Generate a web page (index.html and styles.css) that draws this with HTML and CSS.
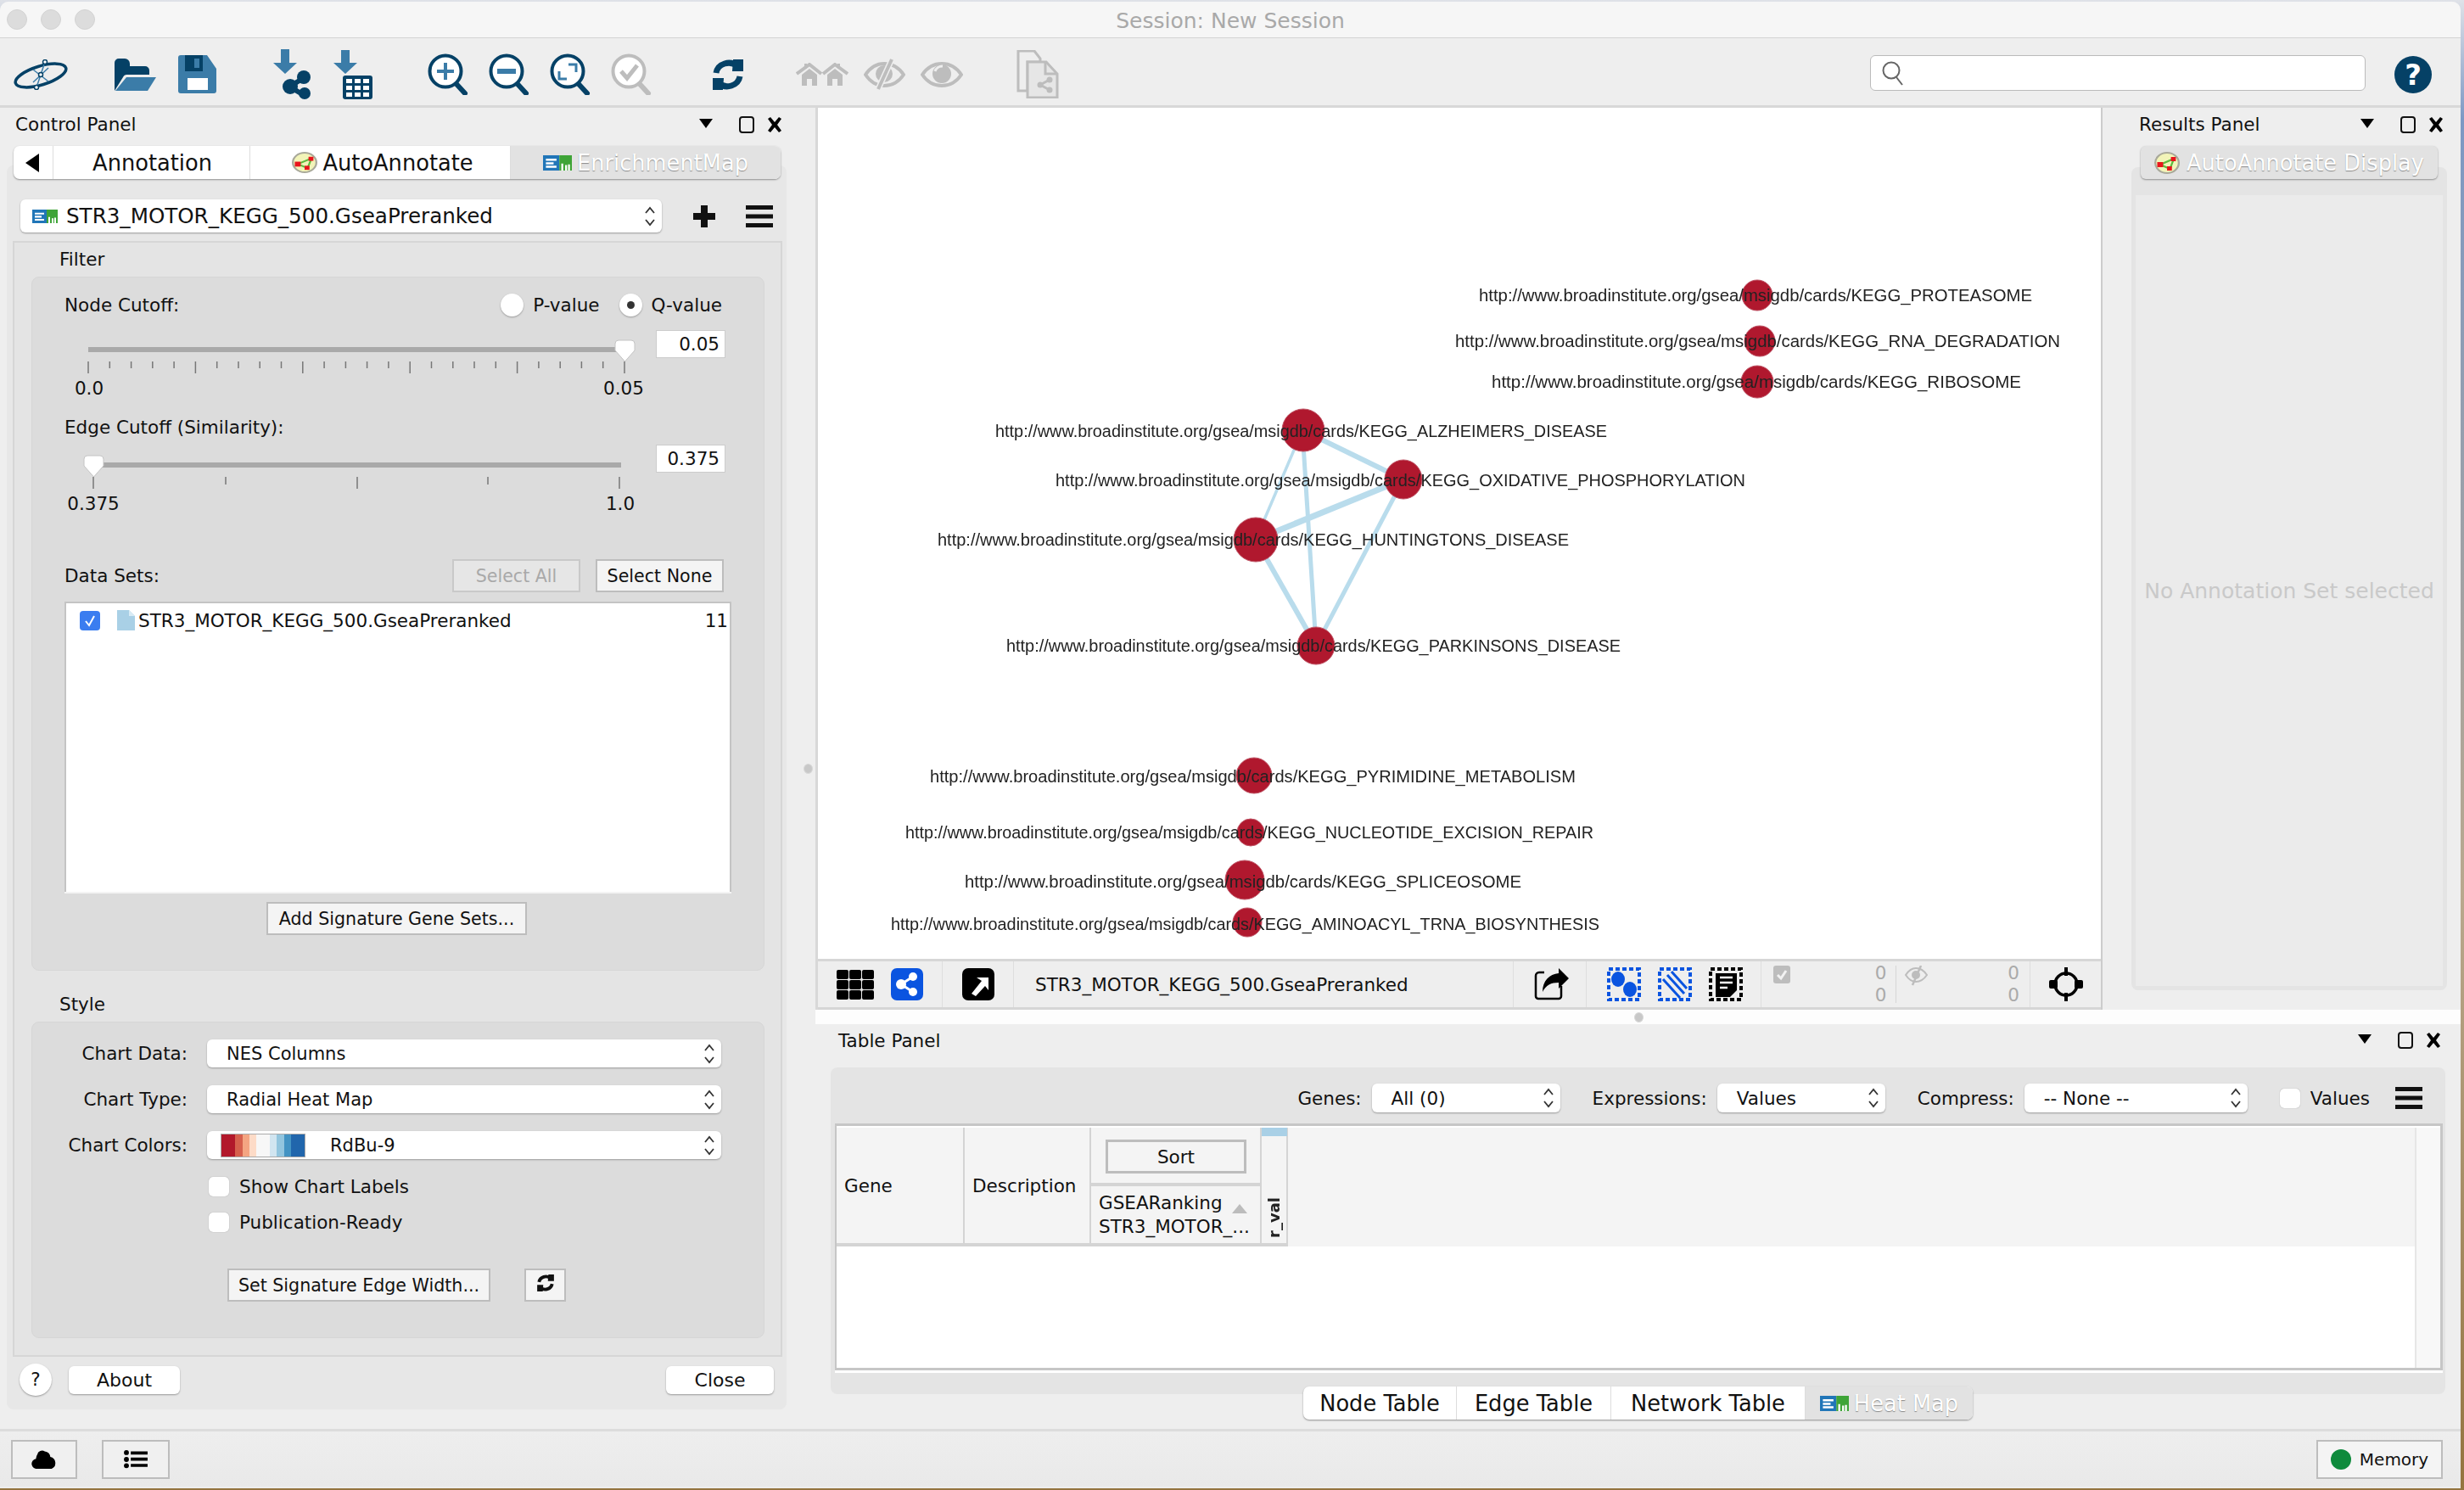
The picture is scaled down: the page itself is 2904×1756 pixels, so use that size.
FILE: index.html
```html
<!DOCTYPE html>
<html lang="en">
<head>
  <meta charset="UTF-8">
  <title>Session: New Session</title>
  <link rel="stylesheet" href="styles.css">
</head>
<body>
  <svg class="defs" width="0" height="0">
    <symbol id="em" viewBox="0 0 30 22" preserveAspectRatio="none">
      <rect width="17" height="22" fill="#2176b8"/><rect x="17" width="13" height="22" fill="#3ea437"/>
      <path d="M3 5h11v3H3zM3 10h8v3H3zM3 15h11v3H3z" fill="#fff"/>
      <path d="M19 12h2v10h-2zM23 14h2v8h-2zM26 13h2v9h-2z" fill="#fff"/>
    </symbol>
    <symbol id="aa" viewBox="0 0 26 26" preserveAspectRatio="none">
      <circle cx="13" cy="13" r="12" fill="#f2f4b8" stroke="#a9a99a" stroke-width="2"/>
      <path d="M6 15L20 8M6 15L16 20M16 20L20 8" stroke="#5dbb3f" stroke-width="2"/>
      <rect x="3" y="12" width="6" height="6" fill="#e8141c"/><rect x="17" y="6" width="5" height="5" fill="#e8141c"/><rect x="13" y="17" width="5" height="5" fill="#e8141c"/>
    </symbol>
    <symbol id="updown" viewBox="0 0 14 26">
      <path d="M2 9l5-6 5 6M2 17l5 6 5-6" fill="none" stroke="#333" stroke-width="1.8"/>
    </symbol>
    <symbol id="menu" viewBox="0 0 32 26">
      <path d="M0 0h32v5H0zM0 10.500h32v5H0zM0 21h32v5H0z" fill="#111"/>
    </symbol>
    <symbol id="panel-ctl" viewBox="0 0 98 20">
      <path d="M0 3h16l-8 11z" fill="#000"/>
      <rect x="48" y="1" width="16" height="18" rx="3" fill="none" stroke="#111" stroke-width="2"/>
      <path d="M81 3l3-2 5 6 5-6 3 2-5 7 5 7-3 2-5-6-5 6-3-2 5-7z" fill="#000"/>
    </symbol>
    <symbol id="magnifier" viewBox="0 0 48 49">
      <path d="M33 35L44 47" stroke="currentColor" stroke-width="6" stroke-linecap="round"/>
      <circle cx="21" cy="21" r="18.500" fill="#fff" stroke="currentColor" stroke-width="4"/>
    </symbol>
    <symbol id="sync" viewBox="0 0 40 36">
      <path d="M6 16a15 14 0 0 1 25-8" fill="none" stroke="currentColor" stroke-width="7"/>
      <path d="M26 0h12v14H25z" fill="currentColor"/>
      <path d="M34 20a15 14 0 0 1-25 8" fill="none" stroke="currentColor" stroke-width="7"/>
      <path d="M14 36H2V22h13z" fill="currentColor"/>
    </symbol>
  </svg>

  <div class="window">
    <header class="titlebar">
      <span class="lights"><i></i><i></i><i></i></span>
      <span class="title">Session: New Session</span>
    </header>

    <div class="toolbar">
      <svg class="tb-logo" width="66" height="36" viewBox="0 0 66 36">
        <ellipse cx="33" cy="19" rx="31" ry="11" transform="rotate(-17 33 19)" fill="none" stroke="#054166" stroke-width="3.500"/>
        <path d="M38 3L28 33M24 12L42 26M42 10L24 27" stroke="#3b7ca8" stroke-width="1.500" fill="none"/>
        <circle cx="38" cy="3" r="2.500" fill="#fff" stroke="#054166" stroke-width="1.500"/>
        <circle cx="28" cy="33" r="2.500" fill="#fff" stroke="#054166" stroke-width="1.500"/>
        <circle cx="33" cy="18" r="2.500" fill="#fff" stroke="#054166" stroke-width="1.500"/>
      </svg>
      <div class="tb-group tb-file">
        <svg width="49" height="38" viewBox="0 0 49 38">
          <path d="M0 38V5a5 5 0 0 1 5-5h7a6 6 0 0 1 6 6v3h18a5 5 0 0 1 5 5v5H15a5 5 0 0 0-5 3L0 38z" fill="#054166"/>
          <path d="M14 22h35L39 38H1z" fill="#3b7ca8"/>
        </svg>
        <svg width="45" height="45" viewBox="0 0 45 45">
          <path d="M3 0h31l11 16v26a3 3 0 0 1-3 3H3a3 3 0 0 1-3-3V3a3 3 0 0 1 3-3z" fill="#3b7ca8"/>
          <path d="M8 0h21v19H8z" fill="#054166"/><path d="M19 4h6v11h-6z" fill="#3b7ca8"/>
          <path d="M11 27h24v14H11z" fill="#fff"/>
        </svg>
      </div>
      <div class="tb-group tb-import">
        <svg width="44" height="59" viewBox="0 0 44 59">
          <path d="M9 0h10v16h9L14 29 0 16h9z" fill="#3b7ca8"/>
          <path d="M36 34L19 44l17 10" fill="none" stroke="#054166" stroke-width="6"/>
          <circle cx="36" cy="33" r="8" fill="#054166"/><circle cx="20" cy="44" r="9" fill="#054166"/><circle cx="37" cy="52" r="7" fill="#054166"/>
        </svg>
        <svg width="46" height="58" viewBox="0 0 46 58">
          <path d="M9 0h10v15h9L14 28 0 15h9z" fill="#3b7ca8"/>
          <rect x="11" y="30" width="35" height="28" rx="3" fill="#054166"/>
          <path d="M15 34h7v5h-7zM25 34h7v5h-7zM35 34h7v5h-7zM15 42h7v5h-7zM25 42h7v5h-7zM35 42h7v5h-7zM15 50h7v5h-7zM25 50h7v5h-7zM35 50h7v5h-7z" fill="#fff"/>
        </svg>
      </div>
      <div class="tb-group tb-zoom">
        <svg class="ic-dark" width="48" height="49" viewBox="0 0 48 49"><use href="#magnifier"/><path d="M11 21h20M21 11v20" stroke="#3b7ca8" stroke-width="4"/></svg>
        <svg class="ic-dark" width="48" height="49" viewBox="0 0 48 49"><use href="#magnifier"/><path d="M10 18h22v6H10z" fill="#3b7ca8"/></svg>
        <svg class="ic-dark" width="48" height="49" viewBox="0 0 48 49"><use href="#magnifier"/><path d="M22 13h9v9M20 30h-9v-9" fill="none" stroke="#3b7ca8" stroke-width="3"/></svg>
        <svg class="ic-grey" width="48" height="49" viewBox="0 0 48 49"><use href="#magnifier"/><path d="M12 21l7 8 12-15" fill="none" stroke="#bdbdbd" stroke-width="5"/></svg>
      </div>
      <svg class="tb-refresh ic-dark" width="40" height="36" viewBox="0 0 40 36"><use href="#sync"/></svg>
      <div class="tb-group tb-view">
        <svg width="62" height="27" viewBox="0 0 62 27">
          <path d="M1 13L16 2l14 11M32 13L46 2l15 11" fill="none" stroke="#bdbdbd" stroke-width="4"/>
          <path d="M7 14l9-7 9 7v13h-6v-8h-6v8H7zM37 14l9-7 9 7v13h-6v-8h-6v8h-6z" fill="#bdbdbd"/>
          <path d="M10 1h3v6h-3zM49 1h3v6h-3z" fill="#bdbdbd"/>
        </svg>
        <svg width="49" height="37" viewBox="0 0 49 37">
          <path d="M2 19C8 10 15 6 24 6s17 4 23 13c-6 9-14 13-23 13S8 28 2 19z" fill="none" stroke="#bdbdbd" stroke-width="4"/>
          <circle cx="24" cy="18" r="10" fill="#bdbdbd"/>
          <path d="M33 1L17 36" stroke="#eee" stroke-width="7"/><path d="M33 1L17 36" stroke="#bdbdbd" stroke-width="4"/>
        </svg>
        <svg width="50" height="30" viewBox="0 0 50 30">
          <path d="M2 15C8 6 16 2 25 2s17 4 23 13c-6 9-14 13-23 13S8 24 2 15z" fill="none" stroke="#bdbdbd" stroke-width="4"/>
          <circle cx="25" cy="14" r="11" fill="#bdbdbd"/><path d="M17 11a9 9 0 0 1 9-6" fill="none" stroke="#eee" stroke-width="3"/>
        </svg>
      </div>
      <svg class="tb-copy" width="51" height="57" viewBox="0 0 51 57">
        <path d="M3 1h19l7 9v4H14v34H3z" fill="none" stroke="#bdbdbd" stroke-width="3"/>
        <path d="M14 14h22l13 14v28H14z" fill="#e6e6e6" stroke="#bdbdbd" stroke-width="3"/>
        <path d="M35 14v14h14" fill="none" stroke="#bdbdbd" stroke-width="3"/>
        <path d="M40 35l-11 6 11 6" fill="none" stroke="#bdbdbd" stroke-width="3"/>
        <circle cx="40" cy="35" r="3.500" fill="#bdbdbd"/><circle cx="29" cy="41" r="3.500" fill="#bdbdbd"/><circle cx="40" cy="47" r="3.500" fill="#bdbdbd"/>
      </svg>
      <div class="search">
        <svg width="26" height="30" viewBox="0 0 26 30">
          <circle cx="11" cy="12" r="9.500" fill="none" stroke="#666" stroke-width="2"/><path d="M17 20l7 9" stroke="#666" stroke-width="2"/>
        </svg>
      </div>
      <div class="help-circle">?</div>
    </div>

    <div class="main">
      <aside class="control-panel">
        <div class="panel-head">
          <span>Control Panel</span>
          <svg class="panel-ctl" width="98" height="20"><use href="#panel-ctl"/></svg>
        </div>
        <div class="seg-tabs seg-left">
          <span class="seg seg-back"><svg width="18" height="22" viewBox="0 0 18 22"><path d="M16 0v22L0 11z" fill="#000"/></svg></span>
          <span class="seg seg-annotation">Annotation</span>
          <span class="seg seg-auto"><svg width="30" height="25"><use href="#aa"/></svg>AutoAnnotate</span>
          <span class="seg seg-em seg-off"><svg width="34" height="18"><use href="#em"/></svg>EnrichmentMap</span>
        </div>
        <div class="panel-box">
          <div class="network-pick">
            <div class="combo combo-main">
              <svg width="30" height="16"><use href="#em"/></svg>
              <span>STR3_MOTOR_KEGG_500.GseaPreranked</span>
              <svg class="updown" width="14" height="26"><use href="#updown"/></svg>
            </div>
            <svg class="plus-btn" width="26" height="26" viewBox="0 0 26 26"><path d="M9 0h8v9h9v8h-9v9H9v-9H0V9h9z" fill="#111"/></svg>
            <svg class="menu-btn" width="32" height="26"><use href="#menu"/></svg>
          </div>

          <div class="inner-box">
            <div class="legend">Filter</div>
            <div class="group filter-group">
              <div class="row-label">
                <span>Node Cutoff:</span>
                <div class="radios">
                  <i class="radio"></i><span>P-value</span>
                  <i class="radio radio-on"></i><span>Q-value</span>
                </div>
              </div>
              <div class="slider-row slider-first">
                <svg class="slider" width="670" height="80" viewBox="0 0 670 80">
                  <path d="M14 12h626v6H14z" fill="#a9a9a9"/>
                  <path d="M14 29v14M39.300 29v8M64.600 29v8M89.800 29v8M115.100 29v8M140.400 29v14M165.700 29v8M191 29v8M216.200 29v8M241.500 29v8M266.800 29v14M292.100 29v8M317.400 29v8M342.600 29v8M367.900 29v8M393.200 29v14M418.500 29v8M443.800 29v8M469 29v8M494.300 29v8M519.600 29v14M544.900 29v8M570.200 29v8M595.400 29v8M620.700 29v8M646 29v14" stroke="#777" stroke-width="1.500"/>
                  <path d="M635 8a4 4 0 0 1 4-4h15a4 4 0 0 1 4 4v8l-11.500 13L635 16z" fill="#fff" stroke="#c4c4c4"/>
                  <text x="15" y="68" text-anchor="middle">0.0</text>
                  <text x="645" y="68" text-anchor="middle">0.05</text>
                </svg>
                <div class="num-input">0.05</div>
              </div>
              <div class="row-label row-edge"><span>Edge Cutoff (Similarity):</span></div>
              <div class="slider-row slider-second">
                <svg class="slider" width="670" height="80" viewBox="0 0 670 80">
                  <path d="M14 13h628v6H14z" fill="#a9a9a9"/>
                  <path d="M20 30v14M176 30v9M331 30v14M485 30v9M640 30v14" stroke="#777" stroke-width="1.500"/>
                  <path d="M9 9a4 4 0 0 1 4-4h15a4 4 0 0 1 4 4v8L20.500 30 9 17z" fill="#fff" stroke="#c4c4c4"/>
                  <text x="20" y="69" text-anchor="middle">0.375</text>
                  <text x="641" y="69" text-anchor="middle">1.0</text>
                </svg>
                <div class="num-input">0.375</div>
              </div>
              <div class="data-row">
                <span>Data Sets:</span>
                <button class="flat-btn flat-off">Select All</button>
                <button class="flat-btn">Select None</button>
              </div>
              <div class="data-list">
                <div class="data-item">
                  <span class="check-on"><svg width="24" height="23" viewBox="0 0 24 23"><path d="M7 12l4 5 6-11" fill="none" stroke="#fff" stroke-width="2"/></svg></span>
                  <svg class="file-ic" width="21" height="24" viewBox="0 0 21 24"><path d="M0 0h14l7 7v17H0z" fill="#a9d0e6"/><path d="M14 0v7h7" fill="#d8ebf5"/></svg>
                  <span class="data-name">STR3_MOTOR_KEGG_500.GseaPreranked</span>
                  <span class="data-count">11</span>
                </div>
              </div>
              <button class="flat-btn add-sets">Add Signature Gene Sets...</button>
            </div>

            <div class="legend legend-style">Style</div>
            <div class="group style-group">
              <div class="style-row">
                <label>Chart Data:</label>
                <div class="combo combo-style"><span>NES Columns</span><svg class="updown" width="14" height="26"><use href="#updown"/></svg></div>
              </div>
              <div class="style-row">
                <label>Chart Type:</label>
                <div class="combo combo-style"><span>Radial Heat Map</span><svg class="updown" width="14" height="26"><use href="#updown"/></svg></div>
              </div>
              <div class="style-row">
                <label>Chart Colors:</label>
                <div class="combo combo-style combo-colors">
                  <span class="ramp"><i class="c1"></i><i class="c2"></i><i class="c3"></i><i class="c4"></i><i class="c5"></i><i class="c6"></i><i class="c7"></i><i class="c8"></i><i class="c9"></i></span>
                  <span>RdBu-9</span>
                  <svg class="updown" width="14" height="26"><use href="#updown"/></svg>
                </div>
              </div>
              <div class="check-row check-first"><i class="check"></i><span>Show Chart Labels</span></div>
              <div class="check-row"><i class="check"></i><span>Publication-Ready</span></div>
              <div class="edge-row">
                <button class="flat-btn edge-width">Set Signature Edge Width...</button>
                <button class="flat-btn edge-refresh"><svg width="22" height="22" viewBox="0 0 40 36"><use href="#sync"/></svg></button>
              </div>
            </div>
          </div>

          <div class="panel-foot">
            <span class="round-help">?</span>
            <button class="mac-btn about-btn">About</button>
            <button class="mac-btn close-btn">Close</button>
          </div>
        </div>
        <i class="grip grip-v"></i>
      </aside>

      <div class="workspace">
        <div class="top-row">
          <section class="network">
            <svg class="net-canvas" width="1512" height="1003" viewBox="964 127 1512 1003">
              <g class="edges">
                <path d="M1535 507L1654 565" stroke-width="6"/>
                <path d="M1535 507L1480 636" stroke-width="3.500"/>
                <path d="M1535 507L1551 761" stroke-width="5"/>
                <path d="M1654 565L1480 636" stroke-width="7"/>
                <path d="M1654 565L1551 761" stroke-width="5"/>
                <path d="M1480 636L1551 761" stroke-width="6"/>
              </g>
              <g class="nodes">
                <circle cx="2071" cy="348" r="18"/><circle cx="2074" cy="402" r="18"/><circle cx="2071" cy="450" r="19"/>
                <ellipse cx="1536" cy="507" rx="25" ry="25"/><ellipse cx="1654" cy="565" rx="22" ry="23"/>
                <ellipse cx="1480" cy="636" rx="26" ry="26"/><ellipse cx="1551" cy="761" rx="22" ry="22"/>
                <circle cx="1478" cy="914" r="21"/><circle cx="1474" cy="981" r="16"/>
                <circle cx="1467" cy="1037" r="23"/><circle cx="1470" cy="1087" r="17"/>
              </g>
              <g class="labels">
                <text x="1743" y="355" textLength="652" lengthAdjust="spacingAndGlyphs">http://www.broadinstitute.org/gsea/msigdb/cards/KEGG_PROTEASOME</text>
                <text x="1715" y="409" textLength="713" lengthAdjust="spacingAndGlyphs">http://www.broadinstitute.org/gsea/msigdb/cards/KEGG_RNA_DEGRADATION</text>
                <text x="1758" y="457" textLength="624" lengthAdjust="spacingAndGlyphs">http://www.broadinstitute.org/gsea/msigdb/cards/KEGG_RIBOSOME</text>
                <text x="1173" y="515" textLength="721" lengthAdjust="spacingAndGlyphs">http://www.broadinstitute.org/gsea/msigdb/cards/KEGG_ALZHEIMERS_DISEASE</text>
                <text x="1244" y="573" textLength="813" lengthAdjust="spacingAndGlyphs">http://www.broadinstitute.org/gsea/msigdb/cards/KEGG_OXIDATIVE_PHOSPHORYLATION</text>
                <text x="1105" y="643" textLength="744" lengthAdjust="spacingAndGlyphs">http://www.broadinstitute.org/gsea/msigdb/cards/KEGG_HUNTINGTONS_DISEASE</text>
                <text x="1186" y="768" textLength="724" lengthAdjust="spacingAndGlyphs">http://www.broadinstitute.org/gsea/msigdb/cards/KEGG_PARKINSONS_DISEASE</text>
                <text x="1096" y="922" textLength="761" lengthAdjust="spacingAndGlyphs">http://www.broadinstitute.org/gsea/msigdb/cards/KEGG_PYRIMIDINE_METABOLISM</text>
                <text x="1067" y="988" textLength="811" lengthAdjust="spacingAndGlyphs">http://www.broadinstitute.org/gsea/msigdb/cards/KEGG_NUCLEOTIDE_EXCISION_REPAIR</text>
                <text x="1137" y="1046" textLength="656" lengthAdjust="spacingAndGlyphs">http://www.broadinstitute.org/gsea/msigdb/cards/KEGG_SPLICEOSOME</text>
                <text x="1050" y="1096" textLength="835" lengthAdjust="spacingAndGlyphs">http://www.broadinstitute.org/gsea/msigdb/cards/KEGG_AMINOACYL_TRNA_BIOSYNTHESIS</text>
              </g>
            </svg>
            <div class="net-toolbar">
              <div class="nt-cell nt-views">
                <svg width="44" height="35" viewBox="0 0 44 35">
                  <path d="M2 0h10a2 2 0 0 1 2 2v7a2 2 0 0 1-2 2H2a2 2 0 0 1-2-2V2a2 2 0 0 1 2-2zM17 0h10a2 2 0 0 1 2 2v7a2 2 0 0 1-2 2H17a2 2 0 0 1-2-2V2a2 2 0 0 1 2-2zM32 0h10a2 2 0 0 1 2 2v7a2 2 0 0 1-2 2H32a2 2 0 0 1-2-2V2a2 2 0 0 1 2-2zM2 12h10a2 2 0 0 1 2 2v7a2 2 0 0 1-2 2H2a2 2 0 0 1-2-2v-7a2 2 0 0 1 2-2zM17 12h10a2 2 0 0 1 2 2v7a2 2 0 0 1-2 2H17a2 2 0 0 1-2-2v-7a2 2 0 0 1 2-2zM32 12h10a2 2 0 0 1 2 2v7a2 2 0 0 1-2 2H32a2 2 0 0 1-2-2v-7a2 2 0 0 1 2-2zM2 24h10a2 2 0 0 1 2 2v7a2 2 0 0 1-2 2H2a2 2 0 0 1-2-2v-7a2 2 0 0 1 2-2zM17 24h10a2 2 0 0 1 2 2v7a2 2 0 0 1-2 2H17a2 2 0 0 1-2-2v-7a2 2 0 0 1 2-2zM32 24h10a2 2 0 0 1 2 2v7a2 2 0 0 1-2 2H32a2 2 0 0 1-2-2v-7a2 2 0 0 1 2-2z" fill="#000"/>
                </svg>
                <svg width="38" height="38" viewBox="0 0 38 38">
                  <rect width="38" height="38" rx="7" fill="#0a54e0"/>
                  <path d="M26 10L12 19l14 9" fill="none" stroke="#fff" stroke-width="3"/>
                  <circle cx="26" cy="10" r="5" fill="#fff"/><circle cx="12" cy="19" r="6" fill="#fff"/><circle cx="26" cy="28" r="5" fill="#fff"/>
                </svg>
              </div>
              <div class="nt-cell nt-detach">
                <svg width="38" height="38" viewBox="0 0 38 38">
                  <rect width="38" height="38" rx="7" fill="#000"/>
                  <path d="M11 30L23 15l-6-4h14v15l-4-5-11 12z" fill="#fff"/>
                </svg>
              </div>
              <div class="nt-cell nt-title">STR3_MOTOR_KEGG_500.GseaPreranked</div>
              <div class="nt-cell nt-export">
                <svg width="42" height="38" viewBox="0 0 42 38">
                  <path d="M13 5H7a4 4 0 0 0-4 4v24a3 3 0 0 0 3 3h24a3 3 0 0 0 3-3V21" fill="none" stroke="#000" stroke-width="2.500"/>
                  <path d="M30 0l12 12-12 12v-7c-9 0-15 3-19 11 0-13 8-21 19-22z" fill="#000"/>
                </svg>
              </div>
              <div class="nt-cell nt-select">
                <svg width="40" height="40" viewBox="0 0 40 40">
                  <rect x="2" y="2" width="36" height="36" fill="none" stroke="#0a54e0" stroke-width="4" stroke-dasharray="5 3"/>
                  <ellipse cx="13" cy="14" rx="8" ry="9" fill="#0a54e0"/><ellipse cx="27" cy="26" rx="8" ry="9" fill="#0a54e0"/>
                </svg>
                <svg width="40" height="40" viewBox="0 0 40 40">
                  <rect x="2" y="2" width="36" height="36" fill="none" stroke="#0a54e0" stroke-width="4" stroke-dasharray="5 3"/>
                  <path d="M6 14l20 22M11 9l20 22M16 5l18 20" stroke="#0a54e0" stroke-width="3"/>
                </svg>
                <svg width="40" height="40" viewBox="0 0 40 40">
                  <rect x="2" y="2" width="36" height="36" fill="none" stroke="#000" stroke-width="4" stroke-dasharray="5 3"/>
                  <path d="M8 7h25v20l-8 8H8z" fill="#000"/>
                  <path d="M13 12h15M13 18h15M13 24h9" stroke="#fff" stroke-width="2.500"/>
                </svg>
              </div>
              <div class="nt-cell nt-counts">
                <div class="count-block">
                  <svg width="20" height="21" viewBox="0 0 20 21"><rect width="20" height="21" rx="3" fill="#bdbdbd"/><path d="M5 11l4 4 6-9" fill="none" stroke="#f2f2f2" stroke-width="3"/></svg>
                  <div class="count-nums"><span>0</span><span>0</span></div>
                </div>
                <div class="count-block count-hidden">
                  <svg width="27" height="24" viewBox="0 0 27 24"><path d="M1 11c4-6 8-8 12-8s9 2 13 8c-4 6-9 8-13 8s-8-2-12-8z" fill="none" stroke="#bdbdbd" stroke-width="2"/><circle cx="13" cy="11" r="5" fill="#bdbdbd"/><path d="M19 0L9 23" stroke="#bdbdbd" stroke-width="2.500"/></svg>
                  <div class="count-nums"><span>0</span><span>0</span></div>
                </div>
              </div>
              <div class="nt-cell nt-nav">
                <svg width="40" height="40" viewBox="0 0 40 40">
                  <circle cx="20" cy="20" r="13" fill="none" stroke="#000" stroke-width="3.500"/>
                  <path d="M20 0v10M20 30v10" stroke="#000" stroke-width="4"/>
                  <rect x="0" y="15" width="10" height="10" rx="2" fill="#000"/><rect x="30" y="15" width="10" height="10" rx="2" fill="#000"/>
                </svg>
              </div>
            </div>
          </section>

          <section class="results">
            <div class="panel-head results-head">
              <span>Results Panel</span>
              <svg class="panel-ctl" width="98" height="20"><use href="#panel-ctl"/></svg>
            </div>
            <div class="results-tab seg-off"><svg width="30" height="26"><use href="#aa"/></svg>AutoAnnotate Display</div>
            <div class="results-box">
              <div class="results-empty">No Annotation Set selected</div>
            </div>
          </section>
        </div>

        <div class="gutter"><i class="grip"></i></div>

        <section class="table-panel">
          <div class="panel-head table-head">
            <span>Table Panel</span>
            <svg class="panel-ctl" width="98" height="20"><use href="#panel-ctl"/></svg>
          </div>
          <div class="table-box">
            <div class="table-controls">
              <span>Genes:</span>
              <div class="combo combo-genes"><span>All (0)</span><svg class="updown" width="14" height="26"><use href="#updown"/></svg></div>
              <span class="ctl-label">Expressions:</span>
              <div class="combo combo-expr"><span>Values</span><svg class="updown" width="14" height="26"><use href="#updown"/></svg></div>
              <span class="ctl-label">Compress:</span>
              <div class="combo combo-compress"><span>-- None --</span><svg class="updown" width="14" height="26"><use href="#updown"/></svg></div>
              <i class="check ctl-check"></i>
              <span>Values</span>
              <svg class="ctl-menu" width="32" height="26"><use href="#menu"/></svg>
            </div>
            <div class="heat-table">
              <div class="heat-main">
                <div class="heat-head">
                  <div class="col col-gene">Gene</div>
                  <div class="col col-desc">Description</div>
                  <div class="col col-rank">
                    <div class="rank-top"><button class="flat-btn sort-btn">Sort</button></div>
                    <div class="rank-name">GSEARanking<br>STR3_MOTOR_...<i class="sort-tri"></i></div>
                  </div>
                  <div class="col col-rval"><i class="rval-flag"></i><span>r_val</span></div>
                </div>
              </div>
              <div class="heat-scroll"></div>
            </div>
          </div>
          <div class="seg-tabs seg-bottom">
            <span class="seg seg-node">Node Table</span>
            <span class="seg seg-edge">Edge Table</span>
            <span class="seg seg-net">Network Table</span>
            <span class="seg seg-heat seg-off"><svg width="34" height="18"><use href="#em"/></svg>Heat Map</span>
          </div>
        </section>
      </div>
    </div>

    <footer class="statusbar">
      <button class="flat-btn status-btn">
        <svg width="30" height="22" viewBox="0 0 40 30"><path d="M9 30a8 8 0 0 1-2-16 11 11 0 0 1 2-7 8 8 0 0 1 12-5 10 10 0 0 1 9 9 10 10 0 0 1 2 19z" fill="#000"/></svg>
      </button>
      <button class="flat-btn status-btn list-btn">
        <svg width="30" height="22" viewBox="0 0 40 30"><path d="M12 2h27v5H12zM12 12h27v5H12zM12 22h27v5H12z" fill="#000"/><circle cx="5" cy="4" r="4" fill="#000"/><circle cx="5" cy="15" r="4" fill="#000"/><circle cx="5" cy="25" r="4" fill="#000"/></svg>
      </button>
      <button class="flat-btn memory-btn"><i></i>Memory</button>
    </footer>
  </div>
</body>
</html>
```

FILE: styles.css
```css
* {
  box-sizing: border-box;
}

html, body {
  margin: 0;
  height: 100%;
}

body {
  width: 2904px;
  height: 1756px;
  overflow: hidden;
  background: linear-gradient(#dfe2e8 0, #7d98c4 8%, #b9a88e 60%, #94743f 100%);
  font: 21.5px "DejaVu Sans", sans-serif;
  color: #111;
}

button {
  font: inherit;
  color: inherit;
}

i {
  display: block;
}

.defs {
  position: absolute;
}

.window {
  width: 2900px;
  height: 1752px;
  margin-top: 2px;
  background: #eee;
  border-radius: 10px 10px 0 0;
  overflow: hidden;
  display: flex;
  flex-direction: column;
}

/* title bar */
.titlebar {
  flex: none;
  height: 43px;
  padding-top: 2px;
  background: #f6f6f6;
  border-bottom: 1px solid #d4d4d4;
  display: flex;
  align-items: center;
  justify-content: center;
  position: relative;
}

.lights {
  position: absolute;
  left: 8px;
  top: 9px;
  display: flex;
  gap: 16px;
}

.lights i {
  width: 24px;
  height: 24px;
  border-radius: 50%;
  background: #dcdcdc;
  border: 1px solid #d2d2d2;
}

.title {
  font-size: 25px;
  color: #a9a9a9;
}

/* main toolbar */
.toolbar {
  flex: none;
  height: 82px;
  padding: 6px 0 0 15px;
  border-bottom: 3px solid #d8d8d8;
  display: flex;
  align-items: center;
}

.tb-group {
  display: flex;
  align-items: center;
}

.tb-file {
  margin-left: 54px;
  gap: 26px;
}

.tb-import {
  margin-left: 67px;
  gap: 27px;
}

.tb-zoom {
  margin-left: 65px;
  gap: 24px;
}

.tb-refresh {
  margin-left: 70px;
}

.tb-view {
  margin-left: 60px;
  gap: 18px;
}

.tb-copy {
  margin-left: 62px;
}

.ic-dark {
  color: #054166;
}

.ic-grey {
  color: #bdbdbd;
}

.search {
  margin: -4px 0 0 auto;
  width: 584px;
  height: 42px;
  background: #fff;
  border: 1px solid #bbb;
  border-radius: 6px;
  padding: 5px 0 0 13px;
}

.help-circle {
  margin: 0 34px;
  width: 44px;
  height: 44px;
  border-radius: 50%;
  background: #054166;
  color: #fff;
  font-size: 34px;
  font-weight: bold;
  line-height: 44px;
  text-align: center;
}

/* layout */
.main {
  flex: none;
  height: 1557px;
  display: flex;
}

.control-panel {
  flex: none;
  width: 961px;
  position: relative;
}

.workspace {
  flex: none;
  width: 1939px;
  display: flex;
  flex-direction: column;
}

.top-row {
  flex: none;
  height: 1063px;
  display: flex;
}

.panel-head {
  height: 45px;
  padding: 0 39px 6px 18px;
  display: flex;
  align-items: center;
  justify-content: space-between;
}

/* segmented tabs */
.seg-tabs {
  display: flex;
  position: relative;
  z-index: 1;
  height: 39px;
  background: #fff;
  border-radius: 7px;
  box-shadow: 0 1px 2px #8f8f8f;
  overflow: hidden;
  font-size: 25.700px;
}

.seg {
  display: flex;
  align-items: center;
  justify-content: center;
  gap: 6px;
  border-right: 1px solid #ddd;
}

.seg-off {
  background: #e2e2e2;
  color: #fff;
  text-shadow: 0 1px 1px #8a8a8a;
}

.seg-left {
  width: 904px;
  margin: 0 0 -16px 16px;
}

.seg-back {
  width: 47px;
}

.seg-annotation {
  width: 232px;
  padding-left: 2px;
}

.seg-auto {
  width: 307px;
  padding-left: 6px;
}

.seg-em {
  width: 318px;
  border-right: 0;
}

/* control panel body */
.panel-box {
  margin-left: 8px;
  width: 919px;
  height: 1466px;
  background: #e7e7e7;
  border-radius: 8px;
  padding-top: 40px;
}

.network-pick {
  display: flex;
  align-items: center;
  padding-left: 16px;
}

.combo {
  display: flex;
  align-items: center;
  background: #fff;
  border-radius: 6px;
  box-shadow: 0 1px 2px #9a9a9a;
  padding: 0 7px 0 23px;
  white-space: nowrap;
}

.updown {
  margin-left: auto;
}

.combo-main {
  width: 756px;
  height: 39px;
  padding-left: 14px;
  gap: 10px;
  font-size: 24.600px;
}

.plus-btn {
  margin-left: 37px;
}

.menu-btn {
  margin-left: 36px;
}

.inner-box {
  margin: 10px 0 0 7px;
  width: 907px;
  height: 1315px;
  background: #e4e4e4;
  border: 2px solid #d6d6d6;
  padding-left: 20px;
}

.legend {
  height: 40px;
  padding-left: 33px;
  line-height: 40px;
}

.legend-style {
  height: 60px;
  padding-top: 20px;
}

.group {
  width: 864px;
  background: #dcdcdc;
  border: 1px solid #d6d6d6;
  border-radius: 9px;
}

.filter-group {
  height: 818px;
}

.row-label {
  margin-top: 16px;
  height: 32px;
  padding: 0 49px 0 38px;
  display: flex;
  align-items: center;
  justify-content: space-between;
}

.radios {
  display: flex;
  align-items: center;
  gap: 11px;
}

.radios .radio-on {
  margin-left: 12px;
}

.radio {
  width: 27px;
  height: 27px;
  border-radius: 50%;
  background: #fff;
  box-shadow: 0 1px 2px #9a9a9a;
  position: relative;
}

.radio-on::after {
  content: "";
  position: absolute;
  left: 9px;
  top: 9px;
  width: 9px;
  height: 9px;
  border-radius: 50%;
  background: #333;
}

.slider-row {
  height: 82px;
  padding-left: 52px;
  display: flex;
  align-items: flex-start;
}

.slider-first {
  margin-top: 14px;
}

.slider-second {
  margin-top: 5px;
}

.slider {
  margin-top: 8px;
  flex: none;
  overflow: visible;
}

.slider text {
  font: 21.5px "DejaVu Sans", sans-serif;
  fill: #111;
}

.num-input {
  margin-left: 13px;
  width: 82px;
  height: 33px;
  background: #fff;
  border: 1px solid #ccc;
  padding-right: 6px;
  text-align: right;
  line-height: 31px;
}

.row-edge {
  margin-top: 16px;
}

.data-row {
  margin-top: 53px;
  height: 39px;
  padding-left: 38px;
  display: flex;
  align-items: center;
}

.data-row span {
  margin-right: auto;
}

.flat-btn {
  background: #f4f4f4;
  border: 2px solid #bdbdbd;
  padding: 0;
  height: 39px;
  white-space: nowrap;
  font-size: 20.600px;
}

.data-row .flat-btn {
  width: 151px;
}

.data-row .flat-off {
  margin-right: 18px;
  background: #e6e6e6;
  border-color: #c9c9c9;
  color: #a9a9a9;
}

.data-row .flat-btn:last-child {
  margin-right: 47px;
}

.data-list {
  margin: 11px 0 0 38px;
  width: 786px;
  height: 342px;
  background: #fff;
  border-top: 2px solid #c4c4c4;
  border-left: 2px solid #c4c4c4;
  border-right: 2px solid #c4c4c4;
  box-shadow: 0 2px 0 #f4f4f4;
}

.data-item {
  height: 40px;
  padding: 0 2px 0 16px;
  display: flex;
  align-items: center;
}

.check-on {
  width: 24px;
  height: 23px;
  border-radius: 4px;
  background: #3b7df0;
}

.file-ic {
  margin-left: 20px;
}

.data-name {
  margin-left: 4px;
  margin-right: auto;
}

.add-sets {
  display: block;
  margin: 12px 0 0 276px;
  width: 307px;
}

.style-group {
  height: 373px;
  padding-top: 20px;
}

.style-row {
  height: 33px;
  margin-bottom: 21px;
  display: flex;
  align-items: center;
}

.style-row label {
  width: 183px;
  margin-right: 23px;
  text-align: right;
}

.combo-style {
  width: 606px;
  height: 33px;
  font-size: 21px;
}

.combo-colors {
  padding-left: 16px;
}

.ramp {
  display: flex;
  width: 100px;
  height: 28px;
  margin-right: 29px;
  border: 1px solid #aaa;
}

.ramp i {
  flex: 1;
}

.ramp .c1, .ramp .c5, .ramp .c9 {
  flex: 2;
}

.c1 { background: #b2182b; }
.c2 { background: #d6604d; }
.c3 { background: #f4a582; }
.c4 { background: #fddbc7; }
.c5 { background: #f7f7f7; }
.c6 { background: #d1e5f0; }
.c7 { background: #92c5de; }
.c8 { background: #4393c3; }
.c9 { background: #2166ac; }

.check-row {
  margin: 19px 0 0 208px;
  height: 23px;
  display: flex;
  align-items: center;
  gap: 12px;
}

.check-first {
  margin-top: 4px;
}

.check {
  width: 24px;
  height: 23px;
  background: #fff;
  border-radius: 5px;
  box-shadow: 0 0 1px #888;
}

.edge-row {
  margin: 43px 0 0 230px;
  display: flex;
  gap: 40px;
}

.edge-width {
  width: 310px;
}

.edge-refresh {
  width: 49px;
}

.panel-foot {
  margin: 8px 15px 0;
  display: flex;
  align-items: center;
}

.round-help {
  width: 38px;
  height: 38px;
  border-radius: 50%;
  background: #fff;
  box-shadow: 0 1px 2px #999;
  text-align: center;
  line-height: 38px;
}

.mac-btn {
  height: 33px;
  background: #fff;
  border: 0;
  border-radius: 6px;
  box-shadow: 0 1px 2px #999;
  padding: 0;
  font-size: 22px;
}

.about-btn {
  margin-left: 20px;
  width: 131px;
}

.close-btn {
  margin-left: auto;
  width: 127px;
}

.grip {
  position: absolute;
  width: 11px;
  height: 12px;
  border-radius: 50%;
  background: #c8c8c8;
  border: 1px solid #d8d8d8;
}

.grip-v {
  right: 3px;
  top: 773px;
}

/* network view */
.network {
  flex: none;
  width: 1515px;
  border-left: 3px solid #d8d8d8;
  display: flex;
  flex-direction: column;
}

.net-canvas {
  display: block;
  flex: none;
  background: #fff;
  filter: blur(0.5px);
}

.edges path {
  stroke: #b9dcec;
  fill: none;
}

.nodes ellipse, .nodes circle {
  fill: #b0182e;
  stroke: #bf5566;
  stroke-width: 1;
}

.labels text {
  font: 20.500px "Liberation Sans", sans-serif;
  fill: #222;
}

.net-toolbar {
  flex: none;
  height: 60px;
  background: #eee;
  border-top: 3px solid #d6d6d6;
  border-bottom: 3px solid #d6d6d6;
  display: flex;
}

.nt-cell {
  display: flex;
  align-items: center;
  border-right: 1px solid #dedede;
}

.nt-views {
  width: 147px;
  padding-left: 22px;
  gap: 20px;
}

.nt-detach {
  width: 84px;
  padding-left: 23px;
}

.nt-title {
  width: 589px;
  padding-left: 25px;
  font-size: 21.500px;
}

.nt-export {
  width: 86px;
  padding-left: 23px;
}

.nt-select {
  width: 206px;
  padding-left: 24px;
  gap: 20px;
}

.nt-counts {
  width: 317px;
  border-right: 1px solid #dedede;
}

.nt-nav {
  width: 82px;
  padding-left: 22px;
  border: 0;
}

.count-block {
  width: 159px;
  height: 44px;
  padding: 0 10px 0 14px;
  border-right: 1px solid #d6d6d6;
  display: flex;
  justify-content: space-between;
  align-items: flex-start;
}

.count-hidden {
  width: 158px;
  padding: 0 12px 0 10px;
  border: 0;
}

.count-nums {
  display: flex;
  flex-direction: column;
  color: #aaa;
  line-height: 26px;
  margin-top: -4px;
  text-align: right;
}

/* results panel */
.results {
  flex: none;
  width: 424px;
  border-left: 2px solid #ccc;
}

.results-head {
  padding: 0 20px 6px 43px;
}

.results-tab {
  position: relative;
  z-index: 1;
  margin-left: 45px;
  width: 350px;
  height: 39px;
  border-radius: 6px;
  box-shadow: 0 1px 2px #8f8f8f;
  display: flex;
  align-items: center;
  justify-content: center;
  gap: 8px;
  font-size: 25.700px;
  white-space: nowrap;
}

.results-box {
  margin: -14px 0 0 34px;
  width: 372px;
  height: 970px;
  background: #e4e4e4;
  border-radius: 8px;
  padding: 33px 5px 5px;
}

.results-empty {
  height: 100%;
  background: #ebebeb;
  color: #c9c9c9;
  display: flex;
  align-items: center;
  justify-content: center;
  white-space: nowrap;
  font-size: 25px;
}

.gutter {
  flex: none;
  height: 17px;
  background: #fdfdfd;
  position: relative;
}

.gutter .grip {
  left: 965px;
  top: 3px;
}

/* table panel */
.table-panel {
  flex: none;
  height: 477px;
}

.table-head {
  height: 40px;
  padding: 0 23px 2px 27px;
  margin-bottom: 11px;
}

.table-box {
  margin-left: 18px;
  width: 1903px;
  height: 385px;
  background: #e4e4e4;
  border-radius: 8px;
}

.table-controls {
  height: 66px;
  padding: 6px 27px 0 0;
  display: flex;
  align-items: center;
  justify-content: flex-end;
}

.table-controls .combo {
  height: 34px;
  margin-left: 12px;
}

.combo-genes {
  width: 222px;
}

.combo-expr {
  width: 198px;
}

.combo-compress {
  width: 263px;
}

.ctl-label {
  margin-left: 38px;
}

.ctl-check {
  margin: 0 12px 0 38px;
}

.ctl-menu {
  margin-left: 30px;
}

.heat-table {
  margin-left: 5px;
  width: 1895px;
  height: 291px;
  background: #fff;
  border: 3px solid #c6c6c6;
  border-left-width: 2px;
  box-shadow: 0 3px 0 #fff;
  padding-top: 2px;
  display: flex;
}

.heat-main {
  flex: none;
  width: 1860px;
}

.heat-head {
  height: 140px;
  background: #f4f4f4;
  display: flex;
}

.heat-scroll {
  flex: none;
  width: 30px;
  background: #f8f8f8;
  border-left: 2px solid #e6e6e6;
}

.col {
  flex: none;
  height: 140px;
  border-bottom: 4px solid #d4d4d4;
  padding-left: 9px;
  display: flex;
  align-items: center;
  position: relative;
}

.col-gene {
  width: 151px;
  border-right: 2px solid #d4d4d4;
}

.col-desc {
  width: 149px;
  border-right: 2px solid #d4d4d4;
}

.col-rank {
  width: 201px;
  padding: 0;
  display: block;
  border-right: 2px solid #d4d4d4;
}

.rank-top {
  height: 69px;
  padding: 14px 0 0 17px;
  border-bottom: 4px solid #d4d4d4;
}

.sort-btn {
  width: 166px;
  height: 40px;
  border-width: 3px;
  font-size: 21.500px;
}

.rank-name {
  padding: 6px 0 0 9px;
  line-height: 28px;
  position: relative;
  white-space: nowrap;
}

.sort-tri {
  position: absolute;
  right: 15px;
  top: 21px;
  width: 0;
  height: 0;
  border-left: 9px solid transparent;
  border-right: 9px solid transparent;
  border-bottom: 11px solid #bcbcbc;
}

.col-rval {
  width: 31px;
  padding: 0;
  border-right: 2px solid #d4d4d4;
}

.rval-flag {
  position: absolute;
  left: 0;
  top: 0;
  width: 30px;
  height: 10px;
  background: #a9d0e6;
}

.col-rval span {
  position: absolute;
  left: 3px;
  bottom: 6px;
  writing-mode: vertical-rl;
  transform: rotate(180deg);
  font-size: 18px;
  font-weight: bold;
  color: #222;
  line-height: 24px;
}

.seg-bottom {
  width: 789px;
  margin: -9px 0 0 575px;
}

.seg-node {
  width: 181px;
}

.seg-edge {
  width: 182px;
}

.seg-net {
  width: 229px;
}

.seg-heat {
  width: 197px;
  border-right: 0;
}

/* status bar */
.statusbar {
  flex: none;
  height: 68px;
  border-top: 3px solid #dcdcdc;
  background: linear-gradient(#eee, #e9e9e9);
  padding: 10px 21px 0 13px;
  display: flex;
}

.status-btn {
  width: 78px;
  height: 46px;
  background: #f0f0f0;
  display: flex;
  align-items: center;
  justify-content: center;
}

.list-btn {
  margin-left: 29px;
  width: 80px;
}

.memory-btn {
  margin-left: auto;
  width: 149px;
  height: 46px;
  display: flex;
  align-items: center;
  justify-content: center;
  gap: 10px;
  font-size: 20px;
}

.memory-btn i {
  width: 24px;
  height: 24px;
  border-radius: 50%;
  background: #0e8a3c;
}
```
